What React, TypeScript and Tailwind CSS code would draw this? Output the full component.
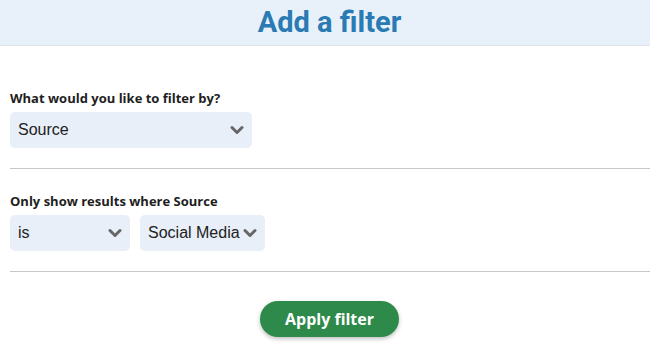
import React from 'react';

const Chevron: React.FC = () => (
  <svg width="14" height="10" viewBox="0 0 14 10" className="shrink-0">
    <path d="M2 2.5 L7 7.5 L12 2.5" fill="none" stroke="#666" strokeWidth="3" strokeLinecap="round" strokeLinejoin="round" />
  </svg>
);

const Select: React.FC<{ value: string; className: string }> = ({ value, className }) => (
  <div className={`flex items-center justify-between h-9 bg-[#e8eff8] rounded-[5px] pl-2 pr-2 ${className}`}>
    <span className="text-[16px] text-[#222] font-['Liberation_Sans',Arial,sans-serif] whitespace-nowrap overflow-hidden">{value}</span>
    <Chevron />
  </div>
);

export default function App() {
  return (
    <div className="w-[650px] h-[352px] bg-white font-['Roboto',sans-serif] overflow-hidden">
      <header className="h-[46px] bg-[#e8f1f9] border-b border-[#dde3ea] flex items-center justify-center pl-[9px]">
        <h1 className="text-[29px] font-bold text-[#2a7ab4] leading-none">Add a filter</h1>
      </header>
      <div className="pl-[10px]">
        <div className="pt-[43px]">
          <p className="text-[13px] font-bold text-[#1e1e1e] leading-[18px] font-['Open_Sans',sans-serif]">What would you like to filter by?</p>
          <Select value="Source" className="w-[242px] mt-[5px]" />
        </div>
        <hr className="mt-[20px] border-t border-[#c8c8c8]" />
        <div className="pt-[23px]">
          <p className="text-[13px] font-bold text-[#1e1e1e] leading-[18px] font-['Open_Sans',sans-serif]">Only show results where Source</p>
          <div className="flex gap-[10px] mt-[5px]">
            <Select value="is" className="w-[120px]" />
            <Select value="Social Media" className="w-[125px]" />
          </div>
        </div>
        <hr className="mt-[20px] border-t border-[#c8c8c8]" />
      </div>
      <div className="flex justify-center pt-[29px] pl-[9px]">
        <button className="h-9 w-[139px] rounded-full bg-[#2e8a4b] text-white font-bold text-[16px] font-['Open_Sans',sans-serif] shadow-[0_2px_4px_rgba(0,0,0,0.25)]">
          Apply filter
        </button>
      </div>
    </div>
  );
}
